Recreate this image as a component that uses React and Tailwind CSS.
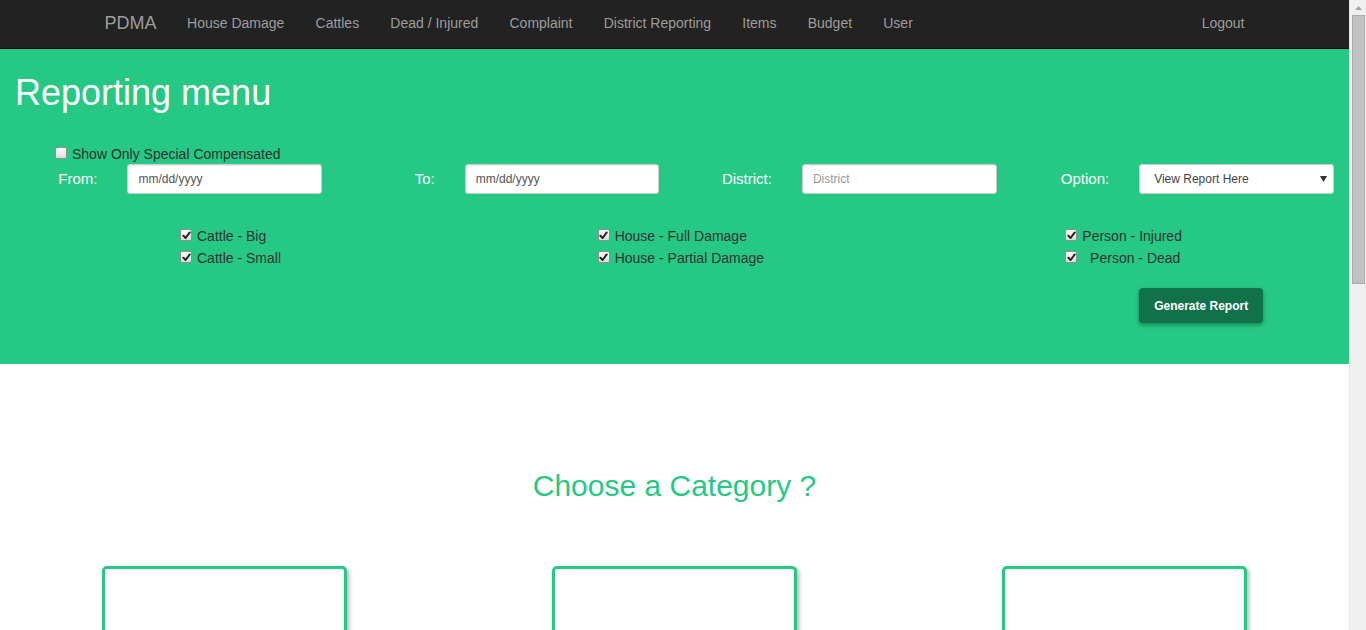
import React from "react";

const navLinks = [
  "House Damage",
  "Cattles",
  "Dead / Injured",
  "Complaint",
  "District Reporting",
  "Items",
  "Budget",
  "User",
];

// each column of checkboxes sits left aligned at its own offset
const checkCols = [
  { pad: "pl-[180px]", items: ["Cattle - Big", "Cattle - Small"] },
  { pad: "pl-[148px]", items: ["House - Full Damage", "House - Partial Damage"] },
  { pad: "pl-[166px]", items: ["Person - Injured", "\u00a0\u00a0Person - Dead"] },
];

// old-style grey chrome checkbox
function Box({ checked }) {
  return (
    <span className="w-[12px] h-[12px] shrink-0 border border-[#8f8f8f] rounded-[2px] bg-gradient-to-b from-[#fcfcfc] to-[#dcdcdc] flex items-center justify-center">
      {checked && (
        <svg width="9" height="9" viewBox="0 0 10 10">
          <path
            d="M1.5 5.2 L4 7.8 L8.6 1.6"
            fill="none"
            stroke="#222"
            strokeWidth="2.2"
            strokeLinecap="round"
            strokeLinejoin="round"
          />
        </svg>
      )}
    </span>
  );
}

function Field({ label, children }) {
  return (
    <div className="flex items-center h-[30px]">
      <div className="w-1/3 px-[15px] text-right text-[15px] text-white">
        {label}
      </div>
      <div className="w-2/3 px-[15px]">{children}</div>
    </div>
  );
}

const inputCls =
  "w-full h-[30px] border border-[#ccc] rounded-[3px] bg-white px-[10px] text-[12px] text-[#555] shadow-[inset_0_1px_1px_rgba(0,0,0,0.075)] outline-none placeholder:text-[#999]";

export default function App() {
  return (
    <div className="flex h-[630px] overflow-hidden bg-white font-['Liberation_Sans',Arial,sans-serif] text-[14px] text-[#333]">
      <div className="flex-1 min-w-0">
        {/* navbar */}
        <div className="h-[49px] bg-[#222] border-b border-[#080808]">
          <div className="w-[1170px] mx-auto px-[15px] h-[46px] flex items-center">
            <span className="text-[18px] leading-[20px] text-[#9d9d9d] mr-[15px]">
              PDMA
            </span>
            {navLinks.map((l) => (
              <span
                key={l}
                className="px-[15.6px] text-[14px] leading-[20px] text-[#9d9d9d]"
              >
                {l}
              </span>
            ))}
            <span className="ml-auto text-[14px] leading-[20px] text-[#9d9d9d]">
              Logout
            </span>
          </div>
        </div>

        {/* reporting menu */}
        <div className="h-[315px] bg-[#25c884] pt-[24px]">
          <h1 className="pl-[15px] text-[36px] leading-[40px] text-white">
            Reporting menu
          </h1>

          <div className="mt-[31px] pl-[55px] h-[20px] flex items-center gap-[5px]">
            <span className="-mt-[3px]">
              <Box checked={false} />
            </span>
            <span>Show Only Special Compensated</span>
          </div>

          <div className="grid grid-cols-4">
            <Field label="From:">
              <input className={inputCls} readOnly value="mm/dd/yyyy" />
            </Field>
            <Field label="To:">
              <input className={inputCls} readOnly value="mm/dd/yyyy" />
            </Field>
            <Field label="District:">
              <input className={inputCls} placeholder="District" />
            </Field>
            <Field label="Option:">
              <div className="h-[30px] border border-[#ccc] rounded-[3px] bg-white pl-[14px] pr-[6px] flex items-center justify-between text-[12px] text-[#444]">
                <span>View Report Here</span>
                <svg width="7" height="6" viewBox="0 0 7 6">
                  <path d="M0 0 H7 L3.5 6 Z" fill="#333" />
                </svg>
              </div>
            </Field>
          </div>

          <div className="mt-[31px] grid grid-cols-3">
            {checkCols.map((col, i) => (
              <div key={i} className={`flex flex-col items-start ${col.pad}`}>
                {col.items.map((c) => (
                  <div
                    key={c}
                    className="h-[22px] flex items-center gap-[5px] whitespace-pre"
                  >
                    <span className="-mt-[2px]">
                      <Box checked />
                    </span>
                    <span>{c}</span>
                  </div>
                ))}
              </div>
            ))}
          </div>

          <div className="mt-[19px] grid grid-cols-4">
            <div className="col-start-4 flex">
              <div className="w-1/3" />
              <div className="px-[15px]">
                <button className="h-[35px] px-[15px] rounded-[4px] bg-[#11714a] text-white text-[12px] font-bold shadow-[0_2px_4px_rgba(0,0,0,0.35)]">
                  Generate Report
                </button>
              </div>
            </div>
          </div>
        </div>

        {/* categories */}
        <div className="pt-[105px]">
          <h2 className="text-center text-[30px] leading-[33px] text-[#25c884]">
            Choose a Category ?
          </h2>
          <div className="mt-[64px] grid grid-cols-3">
            {[0, 1, 2].map((i) => (
              <div key={i} className="flex justify-center">
                <div className="w-[245px] h-[260px] border-[3px] border-[#25c884] rounded-[5px] bg-white shadow-[2px_2px_4px_rgba(0,0,0,0.3)]" />
              </div>
            ))}
          </div>
        </div>
      </div>

      {/* scrollbar */}
      <div className="w-[17px] shrink-0 bg-[#f0f0f0] border-l border-[#e6e6e6] flex flex-col items-center">
        <div className="h-[15px] flex items-center justify-center">
          <svg width="7" height="4" viewBox="0 0 7 4">
            <path d="M3.5 0 L7 4 H0 Z" fill="#a3a3a3" />
          </svg>
        </div>
        <div className="w-[13px] h-[269px] bg-[#c1c1c1] border border-[#aaaaaa]" />
      </div>
    </div>
  );
}
